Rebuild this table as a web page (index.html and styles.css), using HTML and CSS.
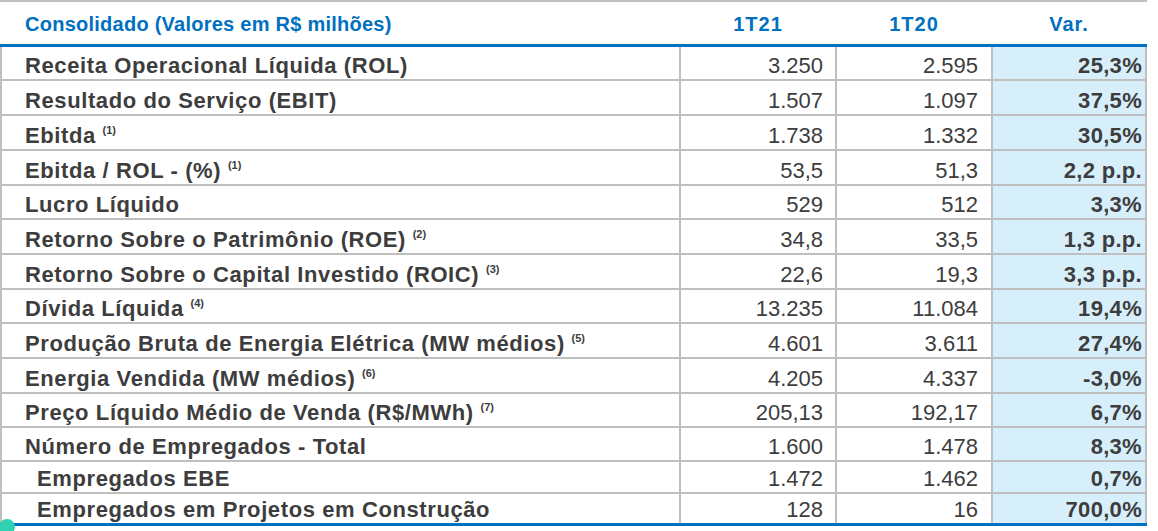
FILE: index.html
```html
<!DOCTYPE html>
<html lang="pt-BR">
<head>
<meta charset="utf-8">
<title>Consolidado</title>
<link rel="stylesheet" href="styles.css">
</head>
<body>
<div class="sheet">
  <div class="head">
    <div class="hc first">Consolidado (Valores em R$ milhões)</div>
    <div class="hc">1T21</div>
    <div class="hc">1T20</div>
    <div class="hc">Var.</div>
  </div>
  <div class="body">
    <div class="lbl"><span>Receita Operacional Líquida (ROL)</span></div><div class="num">3.250</div><div class="num n3">2.595</div><div class="var">25,3%</div>
    <div class="lbl"><span>Resultado do Serviço (EBIT)</span></div><div class="num">1.507</div><div class="num n3">1.097</div><div class="var">37,5%</div>
    <div class="lbl"><span>Ebitda <sup>(1)</sup></span></div><div class="num">1.738</div><div class="num n3">1.332</div><div class="var">30,5%</div>
    <div class="lbl"><span>Ebitda / ROL - (%) <sup>(1)</sup></span></div><div class="num">53,5</div><div class="num n3">51,3</div><div class="var">2,2 p.p.</div>
    <div class="lbl"><span>Lucro Líquido</span></div><div class="num">529</div><div class="num n3">512</div><div class="var">3,3%</div>
    <div class="lbl"><span>Retorno Sobre o Patrimônio (ROE) <sup>(2)</sup></span></div><div class="num">34,8</div><div class="num n3">33,5</div><div class="var">1,3 p.p.</div>
    <div class="lbl"><span>Retorno Sobre o Capital Investido (ROIC) <sup>(3)</sup></span></div><div class="num">22,6</div><div class="num n3">19,3</div><div class="var">3,3 p.p.</div>
    <div class="lbl"><span>Dívida Líquida <sup>(4)</sup></span></div><div class="num">13.235</div><div class="num n3">11.084</div><div class="var">19,4%</div>
    <div class="lbl"><span>Produção Bruta de Energia Elétrica (MW médios) <sup>(5)</sup></span></div><div class="num">4.601</div><div class="num n3">3.611</div><div class="var">27,4%</div>
    <div class="lbl"><span>Energia Vendida (MW médios) <sup>(6)</sup></span></div><div class="num">4.205</div><div class="num n3">4.337</div><div class="var">-3,0%</div>
    <div class="lbl"><span>Preço Líquido Médio de Venda (R$/MWh) <sup>(7)</sup></span></div><div class="num">205,13</div><div class="num n3">192,17</div><div class="var">6,7%</div>
    <div class="lbl"><span>Número de Empregados - Total</span></div><div class="num">1.600</div><div class="num n3">1.478</div><div class="var">8,3%</div>
    <div class="lbl sub"><span>Empregados EBE</span></div><div class="num">1.472</div><div class="num n3">1.462</div><div class="var">0,7%</div>
    <div class="lbl sub"><span>Empregados em Projetos em Construção</span></div><div class="num">128</div><div class="num n3">16</div><div class="var">700,0%</div>
  </div>
  <span class="dot"></span>
</div>
</body>
</html>
```
FILE: styles.css
```css
html, body {
  margin: 0;
  padding: 0;
  background: #ffffff;
}
body {
  font-family: "Liberation Sans", Arial, sans-serif;
  color: #3d3d3d;
}
.sheet {
  position: relative;
  width: 1147px;
  height: 531px;
  overflow: hidden;
}
.head {
  display: grid;
  grid-template-columns: 677px 154px 154px 152px;
  column-gap: 2px;
  padding: 0 2px;
  height: 42px;
  border-top: 2px solid #bfbfbf;
  border-bottom: 3px solid #0070c0;
}
.hc {
  display: flex;
  align-items: flex-end;
  justify-content: center;
  padding-bottom: 8px;
  font-size: 20px;
  font-weight: bold;
  color: #0070c0;
  letter-spacing: 1px;
}
.hc.first {
  justify-content: flex-start;
  padding-left: 23px;
  letter-spacing: 0.25px;
}
.body {
  display: grid;
  grid-template-columns: 677px 154px 154px 152px;
  grid-template-rows: 32px 33px 33px 33px 32px 33px 33px 32px 33px 33px 32px 32px 30px 29px;
  gap: 2px;
  padding: 0 2px;
  background: #bfbfbf;
  border-bottom: 3px solid #0070c0;
}
.lbl, .num, .var {
  display: flex;
  align-items: flex-end;
  font-size: 22px;
  line-height: normal;
  white-space: nowrap;
  background: #ffffff;
}
.lbl {
  font-weight: bold;
  padding-left: 23px;
  letter-spacing: 0.6px;
}
.lbl.sub {
  padding-left: 35px;
}
.num {
  justify-content: flex-end;
  padding-right: 12px;
}
.num.n3 {
  padding-right: 13px;
}
.var {
  justify-content: flex-end;
  padding-right: 3px;
  font-weight: bold;
  background: #d7effb;
  letter-spacing: 0.3px;
}
sup {
  font-size: 11px;
  vertical-align: 9px;
  line-height: 0;
  letter-spacing: 0;
}
.dot {
  position: absolute;
  left: -1px;
  top: 519px;
  width: 16px;
  height: 16px;
  border-radius: 50%;
  background: #2fd3b3;
}
```
